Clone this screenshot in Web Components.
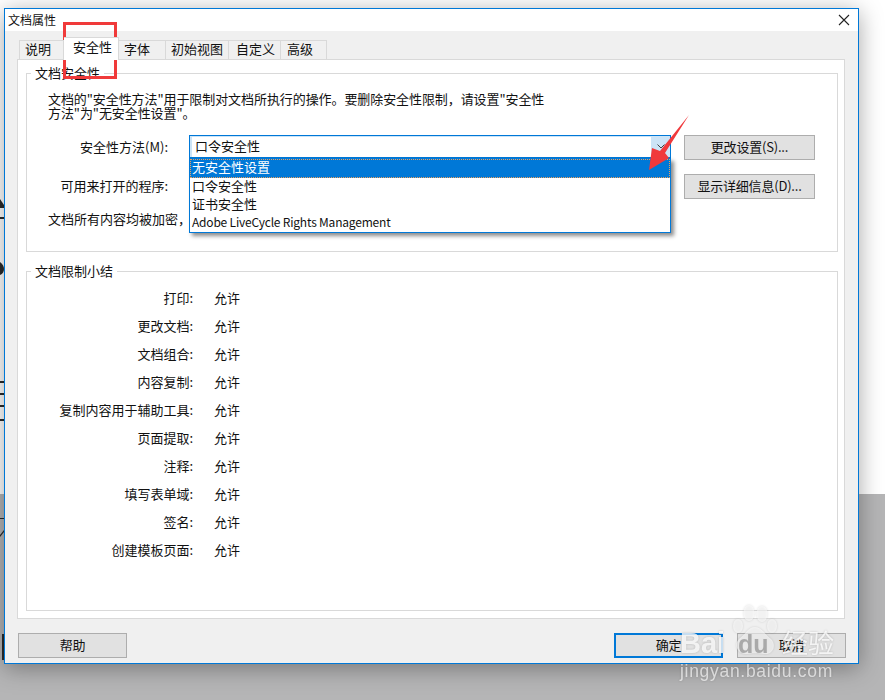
<!DOCTYPE html>
<html>
<head>
<meta charset="utf-8">
<style>
    html, body { margin: 0; height: 700px; overflow: hidden; background: #fff; }
    body { font: 13px/18px "Noto Sans CJK SC", sans-serif; color: #111; }
</style>
</head>
<body>
<desk-top>
    <doc-dialog heading="文档属性">
        <tab-strip slot="tabs"></tab-strip>
        <group-box legend="文档安全性" class="first">
            <security-form></security-form>
        </group-box>
        <group-box legend="文档限制小结" class="second">
            <summary-row label="打印:" value="允许"></summary-row>
            <summary-row label="更改文档:" value="允许"></summary-row>
            <summary-row label="文档组合:" value="允许"></summary-row>
            <summary-row label="内容复制:" value="允许"></summary-row>
            <summary-row label="复制内容用于辅助工具:" value="允许"></summary-row>
            <summary-row label="页面提取:" value="允许"></summary-row>
            <summary-row label="注释:" value="允许"></summary-row>
            <summary-row label="填写表单域:" value="允许"></summary-row>
            <summary-row label="签名:" value="允许"></summary-row>
            <summary-row label="创建模板页面:" value="允许"></summary-row>
        </group-box>
    </doc-dialog>
    <mark-up></mark-up>
    <bai-du></bai-du>
</desk-top>

<script>
class DeskTop extends HTMLElement {
    constructor() {
        super();
        this.attachShadow({ mode: 'open' });
        this.shadowRoot.innerHTML = `
            <style>
                :host { display: block; position: relative; width: 885px; height: 700px; overflow: hidden;
                    background: linear-gradient(#fff 0 494px, #b5b5b6 494px); }
                svg { position: absolute; left: 0; top: 0; }
            </style>
            <svg width="5" height="700" viewBox="0 0 5 700" fill="#2b2b2b">
                <path d="M0 199L4 205V208H0Z"/>
                <rect x="0" y="217" width="4" height="2"/>
                <path d="M0 262C3 264 4 267 4 269C4 271 3 274 0 275Z"/>
                <rect x="0" y="381" width="4" height="2"/>
                <rect x="0" y="393" width="4" height="2"/>
                <rect x="0" y="405" width="4" height="2"/>
                <rect x="0" y="419" width="4" height="2"/>
                <rect x="0" y="518" width="4" height="1"/>
                <path d="M0 535L4 530V532L0 537Z"/>
                <rect x="2" y="634" width="2" height="26"/>
            </svg>
            <slot></slot>
        `;
    }
}

class DocDialog extends HTMLElement {
    constructor() {
        super();
        this.attachShadow({ mode: 'open' });
        this.shadowRoot.innerHTML = `
            <style>
                :host { display: flex; flex-direction: column; position: absolute; left: 4px; top: 8px;
                    width: 853px; height: 654px; background: #f0f0f0; border: 1px solid #0078d7;
                    box-shadow: 0 4px 22px rgba(0, 0, 0, 0.35); }
                .title { display: flex; justify-content: space-between; align-items: center; height: 22px;
                    background: #fff; font-size: 12px; padding: 0 8px 0 3px; }
                .tabs { padding: 8px 13px 0 14px; margin-bottom: -1px; position: relative; z-index: 1; height: 21px; }
                .panel { flex: none; height: 560px; margin: 0 13px 0 12px; background: #fff; border: 1px solid #d9d9d9;
                    padding: 4px 6px 0 8px; box-sizing: border-box; display: flex; flex-direction: column; gap: 10px; }
                .foot { display: flex; justify-content: space-between; padding: 14px 12px 0 13px; }
                .right { display: flex; gap: 14px; }
            </style>
            <div class="title"><span id="heading"></span>
                <svg width="12" height="12" viewBox="0 0 12 12"><path d="M1 1L11 11M11 1L1 11" stroke="#222" stroke-width="1.1" fill="none"/></svg>
            </div>
            <div class="tabs"><slot name="tabs"></slot></div>
            <div class="panel"><slot></slot></div>
            <div class="foot">
                <flat-button style="width:109px">帮助</flat-button>
                <div class="right">
                    <flat-button style="width:109px" focused>确定</flat-button>
                    <flat-button style="width:109px">取消</flat-button>
                </div>
            </div>
        `;
        this.shadowRoot.querySelector('#heading').textContent = this.getAttribute('heading');
    }
}

class TabStrip extends HTMLElement {
    constructor() {
        super();
        this.attachShadow({ mode: 'open' });
        const tabs = [['说明', 45, 5], ['安全性', 55, 9, true], ['字体', 47, 5], ['初始视图', 63, 5], ['自定义', 52, 7], ['高级', 46, 6]];
        this.shadowRoot.innerHTML = `
            <style>
                :host { display: flex; align-items: flex-end; height: 21px; }
                div { box-sizing: border-box; height: 20px; border: 1px solid #d9d9d9; border-left-width: 0;
                    line-height: 16px; background: #f0f0f0; white-space: nowrap; }
                div:first-of-type { border-left-width: 1px; }
                .on { height: 23px; background: #fff; border-bottom: 0; line-height: 18px; }
            </style>
            ${tabs.map(([text, width, pad, on]) => `<div class="${on ? 'on' : ''}" style="width:${width}px;padding-left:${pad}px">${text}</div>`).join('')}
        `;
    }
}

class GroupBox extends HTMLElement {
    constructor() {
        super();
        this.attachShadow({ mode: 'open' });
        this.shadowRoot.innerHTML = `
            <style>
                :host { display: block; }
                :host(.first) fieldset { height: 188px; }
                :host(.second) fieldset { height: 349px; }
                fieldset { box-sizing: border-box; margin: 0; padding: 0; border: 1px solid #d9d9d9; }
                legend { margin-left: 4px; padding: 0 4px; line-height: 18px; }
            </style>
            <fieldset><legend></legend><slot></slot></fieldset>
        `;
        this.shadowRoot.querySelector('legend').textContent = this.getAttribute('legend');
    }
}

class FlatButton extends HTMLElement {
    constructor() {
        super();
        this.attachShadow({ mode: 'open' });
        this.shadowRoot.innerHTML = `
            <style>
                :host { display: flex; box-sizing: border-box; height: 25px; align-items: center; justify-content: center;
                    background: #e1e1e1; border: 1px solid #adadad; padding-bottom: 1px; letter-spacing: -0.2px; }
                :host([focused]) { border: 2px solid #0078d7; }
            </style>
            <slot></slot>
        `;
    }
}

class ComboList extends HTMLElement {
    constructor() {
        super();
        this.attachShadow({ mode: 'open' });
        this.shadowRoot.innerHTML = `
            <style>
                :host { display: block; position: relative; width: 482px; height: 23px; box-sizing: border-box;
                    border: 1px solid #0078d7; background: #cce4f7; }
                .value { background: #fff; width: 459px; height: 20px; margin: 1px 0 0 2px; padding-left: 3px;
                    box-sizing: border-box; line-height: 18px; }
                svg { position: absolute; left: 467px; top: 8px; }
                .list { position: absolute; left: -1px; top: 22px; width: 482px; height: 75px; box-sizing: border-box;
                    background: #fff; border: 1px solid #0078d7; box-shadow: 3px 3px 4px rgba(0, 0, 0, 0.45); }
                .item { height: 18px; line-height: 16px; padding-left: 2px; white-space: nowrap; }
                .item.sel { height: 19px; box-sizing: border-box; background: #0078d7; color: #fff; outline: 1px dotted #e8a060; outline-offset: -1px; }
                .small { font-size: 12px; letter-spacing: -0.2px; }
            </style>
            <div class="value">口令安全性</div>
            <svg width="8" height="5" viewBox="0 0 8 5"><path d="M0.5 0.5L4 4L7.5 0.5" fill="none" stroke="#444"/></svg>
            <div class="list">
                <div class="item sel">无安全性设置</div>
                <div class="item">口令安全性</div>
                <div class="item">证书安全性</div>
                <div class="item small">Adobe LiveCycle Rights Management</div>
            </div>
        `;
    }
}

class SecurityForm extends HTMLElement {
    constructor() {
        super();
        this.attachShadow({ mode: 'open' });
        this.shadowRoot.innerHTML = `
            <style>
                :host { display: block; padding: 10px 0 0 21px; }
                .intro { line-height: 14px; width: 500px; height: 31px; letter-spacing: -0.08px; }
                .row { display: grid; grid-template-columns: 141px 482px 144px; align-items: start; }
                .row label { text-align: right; padding-right: 21px; white-space: nowrap; line-height: 24px; }
                .row flat-button { margin-left: 13px; width: 131px; }
                .one { margin-top: 12px; }
                .two { margin-top: 14px; }
                .note { margin-top: 11px; }
            </style>
            <div class="intro">文档的"安全性方法"用于限制对文档所执行的操作。要删除安全性限制，请设置"安全性<br>方法"为"无安全性设置"。</div>
            <div class="row one"><label>安全性方法(M):</label><combo-list></combo-list><flat-button>更改设置(S)...</flat-button></div>
            <div class="row two"><label>可用来打开的程序:</label><span></span><flat-button>显示详细信息(D)...</flat-button></div>
            <div class="note">文档所有内容均被加密，</div>
        `;
    }
}

class SummaryRow extends HTMLElement {
    constructor() {
        super();
        this.attachShadow({ mode: 'open' });
        this.shadowRoot.innerHTML = `
            <style>
                :host { display: grid; grid-template-columns: 166px 1fr; column-gap: 21px; height: 28px; align-items: center; }
                :host(:first-of-type) { margin-top: 4px; }
                .label { text-align: right; white-space: nowrap; }
            </style>
            <span class="label">${this.getAttribute('label')}</span><span>${this.getAttribute('value')}</span>
        `;
    }
}

class MarkUp extends HTMLElement {
    constructor() {
        super();
        this.attachShadow({ mode: 'open' });
        this.shadowRoot.innerHTML = `
            <style>
                :host { display: block; }
                .box { position: absolute; left: 63px; top: 22px; width: 48px; height: 51px; border: 3px solid #f03a3a; }
                svg { position: absolute; left: 640px; top: 110px; }
            </style>
            <div class="box"></div>
            <svg width="56" height="66" viewBox="640 110 56 66">
                <path d="M689 115L665 153L669 158L649 170L652 148L660 151Z" fill="#f0393c"/>
            </svg>
        `;
    }
}

class BaiDu extends HTMLElement {
    constructor() {
        super();
        this.attachShadow({ mode: 'open' });
        this.shadowRoot.innerHTML = `
            <style>
                :host { display: block; position: absolute; left: 676px; top: 604px; width: 170px; height: 80px;
                    color: rgba(255, 255, 255, 0.78); font-family: "Liberation Sans", sans-serif;
                    filter: drop-shadow(0 0 1px rgba(0, 0, 0, 0.22)); }
                .bai { position: absolute; left: 4px; top: 24px; font: bold 29px/30px "Liberation Sans", sans-serif; }
                .du { position: absolute; left: 62px; top: 25px; font: bold 25px/30px "Liberation Sans", sans-serif; color: rgba(130, 130, 130, 0.6); }
                .cn { position: absolute; left: 106px; top: 23px; font: 26px/30px "Noto Sans CJK SC", sans-serif; }
                .url { position: absolute; left: 4px; top: 58px; font-size: 17.5px; line-height: 18px; letter-spacing: 0.7px; white-space: nowrap; color: rgba(255, 255, 255, 0.65); }
                svg { position: absolute; left: 56px; top: 1px; }
            </style>
            <svg width="46" height="50" viewBox="0 0 46 50" fill="rgba(255,255,255,0.6)">
                <ellipse cx="6" cy="21" rx="5" ry="7"/><ellipse cx="17" cy="8" rx="5.5" ry="8"/>
                <ellipse cx="30" cy="9" rx="5.5" ry="8"/><ellipse cx="40" cy="21" rx="5" ry="7"/>
                <path d="M23 22C16 22 13 30 7 34C1 40 6 50 15 49C20 48 27 48 32 49C41 50 45 40 39 34C33 30 30 22 23 22Z"/>
            </svg>
            <div class="bai">Bai</div>
            <div class="du">du</div>
            <div class="cn">经验</div>
            <div class="url">jingyan.baidu.com</div>
        `;
    }
}

customElements.define('flat-button', FlatButton);
customElements.define('combo-list', ComboList);
customElements.define('desk-top', DeskTop);
customElements.define('doc-dialog', DocDialog);
customElements.define('tab-strip', TabStrip);
customElements.define('group-box', GroupBox);
customElements.define('security-form', SecurityForm);
customElements.define('summary-row', SummaryRow);
customElements.define('mark-up', MarkUp);
customElements.define('bai-du', BaiDu);
</script>
</body>
</html>
